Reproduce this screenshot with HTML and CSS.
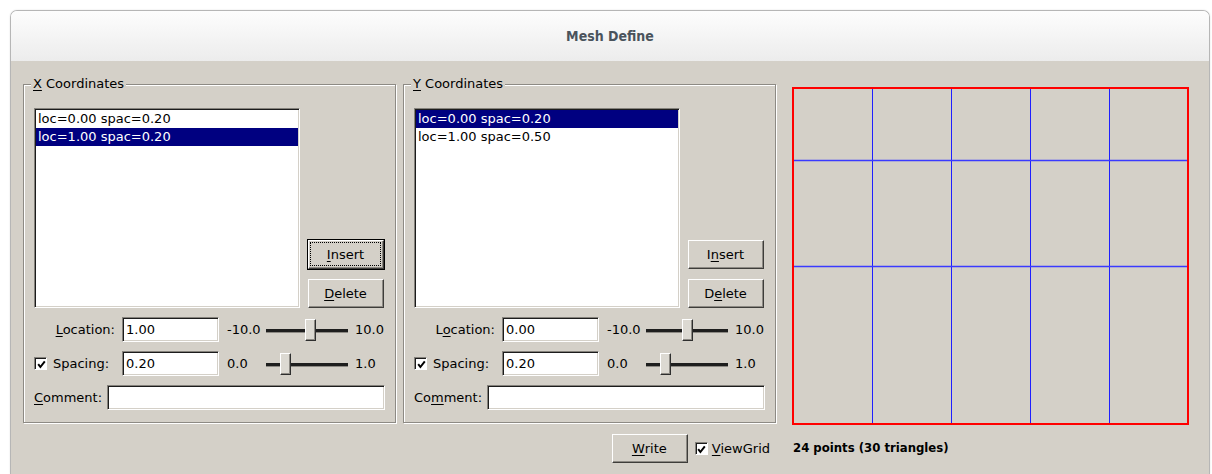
FILE: index.html
```html
<!DOCTYPE html>
<html lang="en">
<head>
<meta charset="utf-8">
<title>Mesh Define</title>
<link rel="stylesheet" href="styles.css">
</head>
<body>
<div class="window">
  <header class="titlebar">Mesh Define</header>
  <main class="client">

    <section class="group">
      <span class="group-title"><u>X</u> Coordinates</span>
      <div class="list-row">
        <ul class="listbox">
          <li>loc=0.00 spac=0.20</li>
          <li class="sel">loc=1.00 spac=0.20</li>
        </ul>
        <div class="btn-col">
          <button class="btn default"><span class="face"><span class="focus"><u>I</u>nsert</span></span></button>
          <button class="btn"><span class="face"><span class="focus"><u>D</u>elete</span></span></button>
        </div>
      </div>
      <div class="field-row">
        <label class="lbl"><span><u>L</u>ocation:</span></label>
        <div class="entry">1.00</div>
        <span class="min">-10.0</span>
        <div class="scale"><span class="thumb" style="--pos:0.55"></span></div>
        <span class="max">10.0</span>
      </div>
      <div class="field-row">
        <label class="lbl check">
          <span class="checkbox"><svg viewBox="0 0 9 9" width="9" height="9"><polyline points="1.2,4.2 3.4,7 7.8,1.4" /></svg></span>
          <span>Spacing:</span>
        </label>
        <div class="entry">0.20</div>
        <span class="min">0.0</span>
        <div class="scale"><span class="thumb" style="--pos:0.2"></span></div>
        <span class="max">1.0</span>
      </div>
      <div class="field-row">
        <label class="lbl-plain"><u>C</u>omment:</label>
        <div class="entry wide"></div>
      </div>
    </section>

    <section class="group">
      <span class="group-title"><u>Y</u> Coordinates</span>
      <div class="list-row">
        <ul class="listbox">
          <li class="sel">loc=0.00 spac=0.20</li>
          <li>loc=1.00 spac=0.50</li>
        </ul>
        <div class="btn-col">
          <button class="btn"><span class="face"><span class="focus">I<u>n</u>sert</span></span></button>
          <button class="btn"><span class="face"><span class="focus">D<u>e</u>lete</span></span></button>
        </div>
      </div>
      <div class="field-row">
        <label class="lbl"><span>L<u>o</u>cation:</span></label>
        <div class="entry">0.00</div>
        <span class="min">-10.0</span>
        <div class="scale"><span class="thumb" style="--pos:0.5"></span></div>
        <span class="max">10.0</span>
      </div>
      <div class="field-row">
        <label class="lbl check">
          <span class="checkbox"><svg viewBox="0 0 9 9" width="9" height="9"><polyline points="1.2,4.2 3.4,7 7.8,1.4" /></svg></span>
          <span>Spacing:</span>
        </label>
        <div class="entry">0.20</div>
        <span class="min">0.0</span>
        <div class="scale"><span class="thumb" style="--pos:0.2"></span></div>
        <span class="max">1.0</span>
      </div>
      <div class="field-row">
        <label class="lbl-plain">Co<u>m</u>ment:</label>
        <div class="entry wide"></div>
      </div>
    </section>

    <div class="canvas">
      <svg width="397" height="338" viewBox="0 0 397 338">
        <g class="grid-v">
          <line x1="80.5" y1="2" x2="80.5" y2="336"/>
          <line x1="159.5" y1="2" x2="159.5" y2="336"/>
          <line x1="238.5" y1="2" x2="238.5" y2="336"/>
          <line x1="317.5" y1="2" x2="317.5" y2="336"/>
        </g>
        <g class="grid-h">
          <line x1="2" y1="73.5" x2="395" y2="73.5"/>
          <line x1="2" y1="179.5" x2="395" y2="179.5"/>
        </g>
        <rect class="bounds" x="1" y="1" width="395" height="336"/>
      </svg>
    </div>

    <div class="actions">
      <button class="btn"><span class="face"><span class="focus"><u>W</u>rite</span></span></button>
      <label class="check-opt">
        <span class="checkbox"><svg viewBox="0 0 9 9" width="9" height="9"><polyline points="1.2,4.2 3.4,7 7.8,1.4" /></svg></span>
        <span><u>V</u>iewGrid</span>
      </label>
    </div>
    <div class="status">24 points (30 triangles)</div>

  </main>
</div>
</body>
</html>
```

FILE: styles.css
```css
* {
  box-sizing: border-box;
}

html,
body {
  margin: 0;
  padding: 0;
}

body {
  width: 1212px;
  height: 474px;
  overflow: hidden;
  background: #ffffff;
  font-family: "DejaVu Sans", "Liberation Sans", sans-serif;
  font-size: 13px;
  color: #000;
}

u {
  text-decoration-thickness: 1px;
  text-underline-offset: 2px;
}

/* ---- window frame ---- */
.window {
  margin: 10px 2px 0 10px;
  height: 464px;
  border: 1px solid #b6b6b6;
  border-bottom: none;
  border-radius: 7px 7px 0 0;
  display: flex;
  flex-direction: column;
  overflow: hidden;
  box-shadow: 0 0 2px rgba(0, 0, 0, 0.12);
}

.titlebar {
  flex: none;
  height: 50px;
  display: flex;
  align-items: center;
  justify-content: center;
  background: linear-gradient(#fdfdfd, #ececec);
  font-family: "DejaVu Sans Condensed", "DejaVu Sans", sans-serif;
  font-stretch: condensed;
  font-weight: bold;
  font-size: 14px;
  color: #4a535c;
}

.client {
  flex: 1;
  background: #d4d0c8;
  padding: 23px 0 0 12px;
  display: grid;
  grid-template-columns: 373px 373px 397px;
  grid-template-rows: auto auto;
  align-content: start;
  column-gap: 7px;
  row-gap: 8px;
  align-items: start;
}

/* ---- labelled group frames ---- */
.group {
  position: relative;
  height: 339px;
  border: 1px solid #8d8a84;
  box-shadow: inset 1px 1px 0 #fff, 1px 1px 0 #fff;
  padding: 23px 10px 12px 10px;
  display: flex;
  flex-direction: column;
  gap: 9px;
}

.group-title {
  position: absolute;
  top: -9px;
  left: 7px;
  padding: 0 2px;
  line-height: 16px;
  background: #d4d0c8;
}

.list-row {
  display: flex;
  align-items: flex-end;
  gap: 7px;
  height: 200px;
}

.listbox {
  flex: 1;
  height: 200px;
  margin: 0;
  list-style: none;
  background: #fff;
  border: 1px solid;
  border-color: #85827c #ffffff #ffffff #85827c;
  box-shadow: inset 1px 1px 0 #1c1c1c, inset -1px -1px 0 #d4d0c8;
  padding: 1px;
}

.listbox li {
  height: 18px;
  line-height: 18px;
  padding-left: 2px;
  white-space: nowrap;
}

.listbox li.sel {
  background: #000080;
  color: #fff;
}

.btn-col {
  display: flex;
  flex-direction: column;
  gap: 8px;
  margin-bottom: -1px;
}

/* ---- raised push buttons ---- */
.btn {
  width: 78px;
  height: 31px;
  padding: 0;
  margin: 0;
  border: 1px solid #d4d0c8;
  background: #d4d0c8;
  font: inherit;
  color: #000;
  display: flex;
}

.btn .face {
  flex: 1;
  display: flex;
  border: 1px solid;
  border-color: #ffffff #3e3d3a #3e3d3a #ffffff;
  box-shadow: inset -1px -1px 0 #8d8a84;
  padding: 1px 2px 2px 1px;
}

.btn .focus {
  flex: 1;
  display: flex;
  align-items: center;
  justify-content: center;
  border: 1px dotted transparent;
}

.btn.default {
  border-color: #000;
}

.btn.default .focus {
  border-color: #000;
}

/* ---- entry rows ---- */
.field-row {
  height: 25px;
  display: flex;
  align-items: center;
}

.lbl {
  width: 88px;
  height: 100%;
  padding-right: 7px;
  display: flex;
  align-items: center;
  justify-content: flex-end;
}

.lbl.check {
  justify-content: flex-start;
  gap: 6px;
}

.lbl-plain {
  margin-right: 5px;
  white-space: nowrap;
}

.entry {
  width: 97px;
  height: 25px;
  background: #fff;
  border: 1px solid;
  border-color: #85827c #ffffff #ffffff #85827c;
  box-shadow: inset 1px 1px 0 #1c1c1c, inset -1px -1px 0 #d4d0c8;
  padding: 0 3px;
  display: flex;
  align-items: center;
}

.entry.wide {
  flex: 1;
  width: auto;
}

.min {
  width: 39px;
  margin-left: 8px;
}

.max {
  margin-left: 7px;
}

/* ---- horizontal scale ---- */
.scale {
  position: relative;
  width: 82px;
  height: 22px;
}

.scale::before {
  content: "";
  position: absolute;
  left: 0;
  right: 0;
  top: 10px;
  height: 3px;
  background: #1e1e1e;
  border-bottom: 1px solid #8d8a84;
}

.thumb {
  position: absolute;
  top: 0;
  left: calc((100% - 11px) * var(--pos));
  width: 11px;
  height: 22px;
  background: #dcd9d2;
  border: 1px solid;
  border-color: #ffffff #2e2e2e #2e2e2e #ffffff;
  box-shadow: inset -1px -1px 0 #8d8a84;
}

/* ---- check boxes ---- */
.checkbox {
  width: 13px;
  height: 13px;
  flex: none;
  background: #fff;
  border: 1px solid;
  border-color: #85827c #ffffff #ffffff #85827c;
  box-shadow: inset 1px 1px 0 #1c1c1c;
  display: flex;
  align-items: center;
  justify-content: center;
  padding: 1px 0 0 1px;
}

.checkbox polyline {
  fill: none;
  stroke: #000;
  stroke-width: 2;
}

/* ---- mesh preview ---- */
.canvas {
  margin-top: 3px;
  margin-left: 9px;
  width: 397px;
  height: 338px;
}

.canvas svg {
  display: block;
}

.grid-v line {
  stroke: #1f1fff;
  stroke-width: 1;
}

.grid-h line {
  stroke: #3a3aff;
  stroke-width: 1.6;
}

.bounds {
  fill: none;
  stroke: #ff0000;
  stroke-width: 2;
}

/* ---- bottom bar ---- */
.actions {
  grid-column: 1 / 3;
  display: flex;
  justify-content: flex-end;
  align-items: center;
  padding-right: 6px;
  gap: 6px;
}

.check-opt {
  display: flex;
  align-items: center;
  gap: 4px;
}

.status {
  margin-left: 10px;
  height: 28px;
  display: flex;
  align-items: center;
  font-family: "DejaVu Sans Condensed", "DejaVu Sans", sans-serif;
  font-stretch: condensed;
  font-weight: bold;
  font-size: 13px;
}
```
